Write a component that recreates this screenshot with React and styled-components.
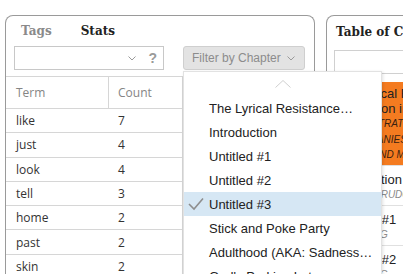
import styled, { createGlobalStyle } from "styled-components";

const GlobalStyle = createGlobalStyle`
  html, body {
    margin: 0;
    padding: 0;
    background: #fff;
    overflow: hidden;
  }
`;

const Page = styled.div`
  display: flex;
  align-items: flex-start;
  gap: 11px;
  padding: 15px 0 0 5px;
  width: 800px;
  height: 274px;
  box-sizing: border-box;
`;

const Panel = styled.section`
  flex: 0 0 auto;
  width: ${(p) => p.$width}px;
  height: 300px;
  box-sizing: border-box;
  border: 1px solid #9a9a9a;
  border-bottom: none;
  border-radius: 8px 8px 0 0;
  position: relative;
`;

const Tabs = styled.div`
  display: flex;
  gap: 29px;
  padding: 7px 0 0 15px;
  height: 23px;
`;

const Tab = styled.div`
  font-family: "DejaVu Serif", serif;
  font-weight: 700;
  font-size: 12px;
  line-height: 16px;
  color: ${(p) => (p.$active ? "#222" : "#8a8a8a")};
`;

const Controls = styled.div`
  display: flex;
  align-items: center;
  gap: 19px;
  padding: 0 0 0 8px;
  height: 24px;
`;

const SearchBox = styled.div`
  width: 150px;
  height: 24px;
  box-sizing: border-box;
  border: 1px solid #c8c8c8;
  display: flex;
  align-items: center;
  justify-content: flex-end;
  gap: 12px;
  padding-right: 6px;
`;

const Help = styled.span`
  font-family: "Liberation Sans", sans-serif;
  font-weight: 700;
  font-size: 14px;
  color: #9a9a9a;
`;

const FilterWrap = styled.div`
  position: relative;
`;

const FilterButton = styled.div`
  width: 122px;
  height: 24px;
  box-sizing: border-box;
  border: 1px solid #cfcfcf;
  border-radius: 3px;
  background: #e3e3e3;
  display: flex;
  align-items: center;
  justify-content: space-between;
  padding: 0 9px 0 8px;
  font-family: "Liberation Sans", sans-serif;
  font-size: 12px;
  color: #8c8c8c;
`;

const Menu = styled.div`
  position: absolute;
  left: 0;
  top: 25px;
  width: 197px;
  height: 220px;
  background: #fff;
  border: 1px solid #e2e2e2;
  box-shadow: 1px 1px 3px rgba(0, 0, 0, 0.12);
  z-index: 5;
`;

const MenuCaret = styled.div`
  display: flex;
  justify-content: center;
  height: 24px;
  padding-top: 8px;
  box-sizing: border-box;
`;

const MenuItem = styled.div`
  display: flex;
  align-items: center;
  height: 24px;
  padding-left: 25px;
  position: relative;
  background: ${(p) => (p.$selected ? "#d6e7f4" : "transparent")};
  font-family: "Liberation Sans", sans-serif;
  font-size: 13px;
  color: #222;
  white-space: nowrap;
  overflow: hidden;
`;

const Check = styled.svg`
  position: absolute;
  left: 4px;
  top: 5px;
`;

const Table = styled.div`
  margin-top: 6px;
  width: 176px;
  border-top: 1px solid #d6d6d6;
  border-right: 1px solid #d6d6d6;
  font-family: "Open Sans", sans-serif;
  font-size: 12px;
`;

const Row = styled.div`
  display: grid;
  grid-template-columns: 102px 1fr;
  height: ${(p) => (p.$head ? 31 : 23.3)}px;
  border-bottom: 1px solid #d6d6d6;
  color: ${(p) => (p.$head ? "#858585" : "#333")};
`;

const Cell = styled.div`
  display: flex;
  align-items: center;
  padding-left: ${(p) => (p.$divider ? 9 : 10)}px;
  border-left: ${(p) => (p.$divider ? "1px solid #d6d6d6" : "none")};
`;

const Title = styled.div`
  font-family: "DejaVu Serif", serif;
  font-weight: 700;
  font-size: 12px;
  line-height: 16px;
  color: #222;
  padding: 8px 0 0 9px;
  height: 26px;
  white-space: nowrap;
`;

const TocSearch = styled.div`
  margin-left: 7px;
  height: 22px;
  border: 1px solid #d0d0d0;
`;

const TocList = styled.div`
  margin-top: 8px;
  font-family: "Liberation Sans", sans-serif;
`;

const TocItem = styled.div`
  padding: ${(p) => (p.$current ? "4px 0 2px 7px" : "6px 0 2.5px 7px")};
  background: ${(p) => (p.$current ? "#f47b20" : "#fff")};
  border-bottom: 1px solid #e0e0e0;
  white-space: nowrap;
`;

const TocName = styled.div`
  font-size: 13px;
  line-height: 15px;
  color: #222;
`;

const TocMeta = styled.div`
  font-size: 10px;
  line-height: 15.5px;
  font-style: italic;
  text-transform: uppercase;
  color: ${(p) => (p.$current ? "#3a2110" : "#8a8a8a")};
`;

const Chevron = ({ color = "#9a9a9a" }) => (
  <svg width="8" height="5" viewBox="0 0 8 5">
    <polyline points="0.5,0.5 4,4 7.5,0.5" fill="none" stroke={color} strokeWidth="1" />
  </svg>
);

const terms = [
  ["like", 7],
  ["just", 4],
  ["look", 4],
  ["tell", 3],
  ["home", 2],
  ["past", 2],
  ["skin", 2],
  ["hand", 2],
];

const chapters = [
  "The Lyrical Resistance…",
  "Introduction",
  "Untitled #1",
  "Untitled #2",
  "Untitled #3",
  "Stick and Poke Party",
  "Adulthood (AKA: Sadness…",
  "God's Parking Lot",
];

export default function App() {
  return (
    <>
      <GlobalStyle />
      <Page>
        <Panel $width={310}>
          <Tabs>
            <Tab>Tags</Tab>
            <Tab $active>Stats</Tab>
          </Tabs>
          <Controls>
            <SearchBox>
              <Chevron />
              <Help>?</Help>
            </SearchBox>
            <FilterWrap>
              <FilterButton>
                Filter by Chapter
                <Chevron />
              </FilterButton>
              <Menu>
                <MenuCaret>
                  <svg width="16" height="8" viewBox="0 0 16 8">
                    <polyline points="0.5,7.5 8,0.5 15.5,7.5" fill="none" stroke="#cfcfcf" strokeWidth="1" />
                  </svg>
                </MenuCaret>
                {chapters.map((c, i) => (
                  <MenuItem key={c} $selected={i === 4}>
                    {i === 4 && (
                      <Check width="16" height="14" viewBox="0 0 16 14">
                        <polyline points="1,7 6,12 15,1.5" fill="none" stroke="#8e8e8e" strokeWidth="1.6" />
                      </Check>
                    )}
                    {c}
                  </MenuItem>
                ))}
              </Menu>
            </FilterWrap>
          </Controls>
          <Table>
            <Row $head>
              <Cell>Term</Cell>
              <Cell $divider>Count</Cell>
            </Row>
            {terms.map(([t, n]) => (
              <Row key={t}>
                <Cell>{t}</Cell>
                <Cell>{n}</Cell>
              </Row>
            ))}
          </Table>
        </Panel>
        <Panel $width={300}>
          <Title>Table of Contents</Title>
          <TocSearch />
          <TocList>
            <TocItem $current>
              <TocName>The Lyrical Resistance</TocName>
              <TocName>Revolution in Verse</TocName>
              <TocMeta $current>Demonstrations</TocMeta>
              <TocMeta $current>Miscellanies</TocMeta>
              <TocMeta $current>Poems and more</TocMeta>
            </TocItem>
            <TocItem>
              <TocName>Introduction</TocName>
              <TocMeta>By Ann Drudge</TocMeta>
            </TocItem>
            <TocItem>
              <TocName>Untitled #1</TocName>
              <TocMeta>By J Doug</TocMeta>
            </TocItem>
            <TocItem>
              <TocName>Untitled #2</TocName>
              <TocMeta>By J Doug</TocMeta>
            </TocItem>
          </TocList>
        </Panel>
      </Page>
    </>
  );
}
